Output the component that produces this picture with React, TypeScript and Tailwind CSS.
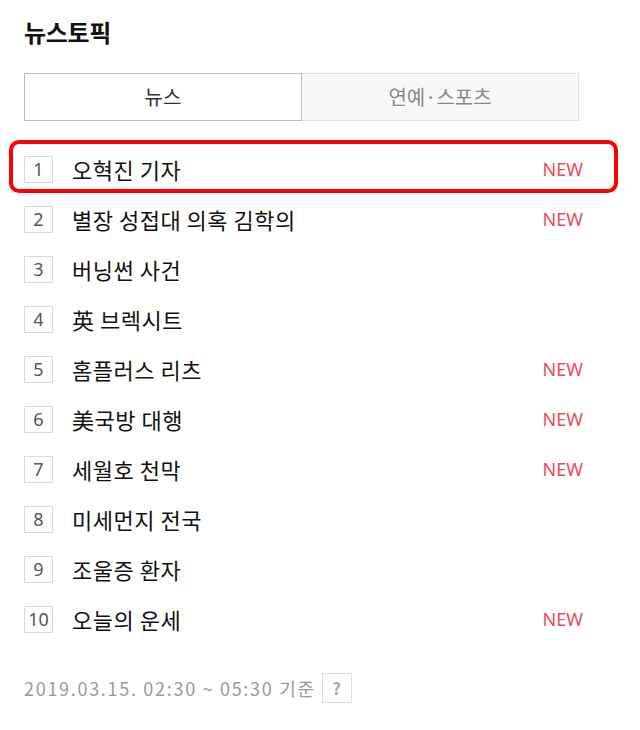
import React, { useState } from 'react';

const topics = [
  { rank: 1, title: '오혁진 기자', isNew: true },
  { rank: 2, title: '별장 성접대 의혹 김학의', isNew: true },
  { rank: 3, title: '버닝썬 사건', isNew: false },
  { rank: 4, title: '英 브렉시트', isNew: false },
  { rank: 5, title: '홈플러스 리츠', isNew: true },
  { rank: 6, title: '美국방 대행', isNew: true },
  { rank: 7, title: '세월호 천막', isNew: true },
  { rank: 8, title: '미세먼지 전국', isNew: false },
  { rank: 9, title: '조울증 환자', isNew: false },
  { rank: 10, title: '오늘의 운세', isNew: true },
];

const App = () => {
  const [tab, setTab] = useState<'news' | 'ent'>('news');

  return (
    <div className="min-h-screen bg-white pl-6 pt-[16px] font-['Noto_Sans_CJK_KR','Noto_Sans',sans-serif] text-[#111]">
      <h1 className="text-[24px] font-bold leading-[32px] tracking-[-0.3px]">뉴스토픽</h1>

      <div className="mt-[25px] flex w-[555px]">
        <button
          onClick={() => setTab('news')}
          className={`h-[48px] flex-1 border text-[20px] ${tab === 'news' ? 'border-[#bbbdbf] bg-white text-[#333]' : 'border-[#dcdfe2] bg-[#f8f9fa] text-[#888]'}`}
        >
          뉴스
        </button>
        <button
          onClick={() => setTab('ent')}
          className={`h-[48px] flex-1 border border-l-0 text-[20px] ${tab === 'ent' ? 'border-[#bbbdbf] bg-white text-[#333]' : 'border-[#dcdfe2] bg-[#f8f9fa] text-[#888]'}`}
        >
          연예·스포츠
        </button>
      </div>

      <ul className="mt-[23px] w-[559px]">
        {topics.map(t => (
          <li key={t.rank} className="relative flex h-[50px] items-center">
            {t.rank === 1 && (
              <div className="pointer-events-none absolute left-[-15px] top-[-4px] h-[53px] w-[609px] rounded-[10px] border-[4px] border-[#f00]" />
            )}
            <span className="flex h-[27px] w-[29px] items-center justify-center border border-[#dadada] text-[18px] leading-none text-[#555] font-['Noto_Sans',sans-serif]">
              {t.rank}
            </span>
            <span className="ml-[19px] flex-1 text-[22px] leading-none tracking-[0.5px] text-[#111]">{t.title}</span>
            {t.isNew && (
              <span className="text-[18px] leading-none text-[#ec4c55] font-['Noto_Sans',sans-serif]">NEW</span>
            )}
          </li>
        ))}
      </ul>

      <div className="mt-[29px] flex items-center gap-[6px] text-[18px] tracking-[1.7px] text-[#999]">
        <span>2019.03.15. 02:30 ~ 05:30 기준</span>
        <span className="flex h-[30px] w-[30px] items-center justify-center border border-[#dedede] text-[17px] font-bold tracking-normal text-[#aaa]">?</span>
      </div>
    </div>
  );
};

export default App;
